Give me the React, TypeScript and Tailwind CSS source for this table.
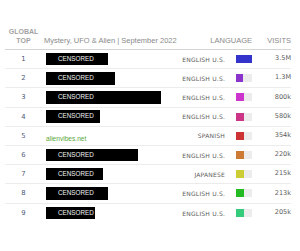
import React from "react";

type Row = {
  rank: number;
  name: string;
  censored: boolean;
  boxW: number;
  lang: string;
  color: string;
  fill: number;
  visits: string;
};

const rows: Row[] = [
  { rank: 1, name: "CENSORED", censored: true, boxW: 62, lang: "ENGLISH U.S.", color: "#3434cc", fill: 16, visits: "3.5M" },
  { rank: 2, name: "CENSORED", censored: true, boxW: 69, lang: "ENGLISH U.S.", color: "#8a34cc", fill: 7, visits: "1.3M" },
  { rank: 3, name: "CENSORED", censored: true, boxW: 115, lang: "ENGLISH U.S.", color: "#cc34cc", fill: 8, visits: "800k" },
  { rank: 4, name: "CENSORED", censored: true, boxW: 54, lang: "ENGLISH U.S.", color: "#cc3488", fill: 8, visits: "580k" },
  { rank: 5, name: "alienvibes.net", censored: false, boxW: 0, lang: "SPANISH", color: "#cc3434", fill: 8, visits: "354k" },
  { rank: 6, name: "CENSORED", censored: true, boxW: 92, lang: "ENGLISH U.S.", color: "#cc7a34", fill: 8, visits: "220k" },
  { rank: 7, name: "CENSORED", censored: true, boxW: 57, lang: "JAPANESE", color: "#cccc34", fill: 8, visits: "215k" },
  { rank: 8, name: "CENSORED", censored: true, boxW: 62, lang: "ENGLISH U.S.", color: "#22bb22", fill: 8, visits: "213k" },
  { rank: 9, name: "CENSORED", censored: true, boxW: 49, lang: "ENGLISH U.S.", color: "#34cc7a", fill: 8, visits: "205k" },
];

export default function App() {
  return (
    <div className="w-[300px] h-[251px] bg-white pt-[27px] pl-[5px] font-['Liberation_Sans',Arial,sans-serif]">
      <div className="w-[286px]">
        {/* header */}
        <div className="flex items-end h-[23px] border-b border-[#d4d4d4] pb-[4px] text-[7.5px] leading-[9px] text-[#8a8a8a]">
          <div className="w-[37px] text-center leading-[8.5px] font-bold text-[#a3a3a3] text-[7px]">
            GLOBAL
            <br />
            TOP
          </div>
          <div className="flex-1 pl-[2px]">Mystery, UFO &amp; Alien | September 2022</div>
          <div className="w-[44px] text-right">LANGUAGE</div>
          <div className="w-[39px] text-right">VISITS</div>
        </div>

        {rows.map((r, i) => (
          <div
            key={r.rank}
            className={`flex items-center h-[19.2px] ${i < rows.length - 1 ? "border-b border-[#ececec]" : ""}`}
          >
            <div className="w-[37px] text-center text-[6.8px] text-[#4d5a78] font-['DejaVu_Sans',sans-serif]">
              {r.rank}
            </div>
            <div className="flex-1 pl-[4px]">
              {r.censored ? (
                <div
                  className="h-[12.5px] bg-black text-[#f2f2f2] text-[6.3px] leading-[12.5px] pl-[12px]"
                  style={{ width: r.boxW }}
                >
                  {r.name}
                </div>
              ) : (
                <span className="text-[#5aa83c] text-[6.6px] leading-[12px]">{r.name}</span>
              )}
            </div>
            <div className="text-right text-[6px] tracking-[0.2px] text-[#5c5c5c] font-['DejaVu_Sans',sans-serif] mr-[11px]">
              {r.lang}
            </div>
            <div className="w-[16px] h-[8px] bg-[#ececec] flex">
              <div className="h-full" style={{ width: r.fill, backgroundColor: r.color }} />
            </div>
            <div className="w-[39px] text-right text-[6.5px] text-[#5c5c5c] font-['DejaVu_Sans',sans-serif]">
              {r.visits}
            </div>
          </div>
        ))}
      </div>
    </div>
  );
}
